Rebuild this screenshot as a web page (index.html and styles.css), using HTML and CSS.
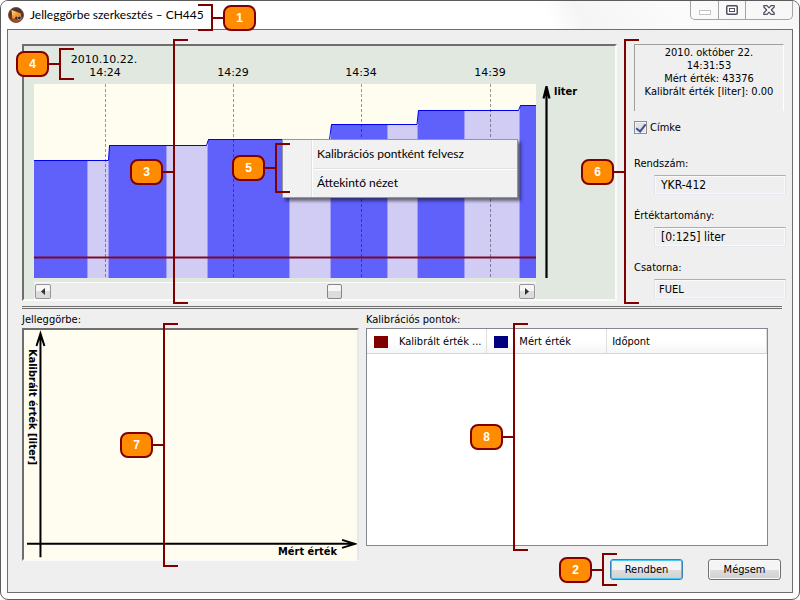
FILE: index.html
```html
<!DOCTYPE html>
<html lang="hu">
<head>
<meta charset="utf-8">
<title>Jelleggörbe szerkesztés – CH445</title>
<link rel="stylesheet" href="styles.css">
</head>
<body>
<div class="window">
  <header class="titlebar">
    <svg class="app-icon" viewBox="0 0 16 16" aria-hidden="true">
      <defs>
        <radialGradient id="orb" cx="50%" cy="85%" r="80%">
          <stop offset="0" stop-color="#b5532c"/>
          <stop offset="0.5" stop-color="#6b3524"/>
          <stop offset="1" stop-color="#3d3636"/>
        </radialGradient>
        <linearGradient id="flag" x1="0" y1="0" x2="1" y2="1">
          <stop offset="0" stop-color="#ffe0a0"/>
          <stop offset="0.5" stop-color="#f59a2c"/>
          <stop offset="1" stop-color="#d9731a"/>
        </linearGradient>
      </defs>
      <circle cx="8" cy="8" r="7.5" fill="url(#orb)" stroke="#8a4a35"/>
      <path d="M3.500 3 13 6.500v3L4.500 12z" fill="url(#flag)"/>
      <circle cx="8.500" cy="11" r="1.300" fill="#222"/>
      <circle cx="11.300" cy="11" r="1.800" fill="#222" stroke="#b9a79c" stroke-width=".8"/>
    </svg>
    <h1 class="title">Jelleggörbe szerkesztés – CH445</h1>
    <div class="window-buttons">
      <button class="wb" type="button" disabled aria-label="Kis méret">
        <svg viewBox="0 0 12 5" width="12" height="5"><rect x=".5" y=".5" width="11" height="4" fill="#fff" stroke="#c4c4c4"/></svg>
      </button>
      <button class="wb" type="button" aria-label="Teljes méret">
        <svg viewBox="0 0 12 10" width="12" height="10"><rect x=".75" y=".75" width="10.500" height="8.500" rx="1" fill="#fff" stroke="#50505e" stroke-width="1.500"/><rect x="3.500" y="3.500" width="5" height="3" fill="#fff" stroke="#50505e"/></svg>
      </button>
      <button class="wb wb-close" type="button" aria-label="Bezárás">
        <svg viewBox="0 0 12 10" width="12" height="10"><path d="M.8.6H4L6 2.900 8 .6h3.200v1.400L8.300 5l2.900 3v1.400H8L6 7.100 4 9.400H.8V8l2.900-3L.8 2z" fill="#fff" stroke="#50505e" stroke-width="1.200" stroke-linejoin="round"/></svg>
      </button>
    </div>
  </header>

  <main class="client">
    <section class="upper">
      <div class="chart-panel">
        <svg class="chart" viewBox="24 46 591 236" role="img" aria-label="Mért értékek">
          <g class="chart-text">
            <text x="104" y="63" text-anchor="middle">2010.10.22.</text>
            <text x="105" y="76" text-anchor="middle">14:24</text>
            <text x="233" y="76" text-anchor="middle">14:29</text>
            <text x="361" y="76" text-anchor="middle">14:34</text>
            <text x="490" y="76" text-anchor="middle">14:39</text>
          </g>
          <rect x="34" y="84" width="502" height="194" fill="#fffdf0"/>
          <path fill="#d0ccf4" d="M34 160H108L110 145H207L209 139H330L332 124H417L419 110H519L521 105H536V278H34z"/>
          <path fill="#6060fa" d="M34 160H87V278H34zM109 145H166V278H109zM208 139H289V278H208zM331 124H387V278H331zM418 110H464V278H418zM520 105H536V278H520z"/>
          <path class="block-edge" d="M87.500 161V278M108.500 161V278M166.500 146V278M207.500 146V278M289.500 140V278M330.500 140V278M387.500 125V278M417.500 125V278M464.500 111V278M519.500 111V278"/>
          <path fill="none" stroke="#0000f0" d="M34 160.500H108.500L109.500 145.500H206.500L208.500 139.500H329.500L331.500 124.500H417L418.500 110.500H518.500L520.500 105.500H536"/>
          <path class="grid-line" d="M105.500 84V278M233.500 84V278M361.500 84V278M490.500 84V278"/>
          <path d="M34 257.500H536" stroke="#7c0a28" stroke-width="2"/>
          <path d="M546.500 278V86M543.500 98.500 546.500 86.500 549.500 98.500" fill="none" stroke="#000" stroke-width="2.200"/>
          <text class="chart-label" x="554" y="95">liter</text>
        </svg>
        <div class="scrollbar">
          <button class="scroll-arrow" type="button" aria-label="Balra"><svg viewBox="0 0 4 7" width="4" height="7"><path d="M4 0v7L0 3.500z" fill="#333"/></svg></button>
          <input class="scroll-range" type="range" min="0" max="100" value="61" aria-label="Görgetés">
          <button class="scroll-arrow" type="button" aria-label="Jobbra"><svg viewBox="0 0 4 7" width="4" height="7"><path d="M0 0v7l4-3.500z" fill="#333"/></svg></button>
        </div>
      </div>

      <aside class="side">
        <div class="info">
          <div>2010. október 22.</div>
          <div>14:31:53</div>
          <div>Mért érték: 43376</div>
          <div>Kalibrált érték [liter]: 0.00</div>
        </div>
        <label class="check"><input type="checkbox" checked><span>Címke</span></label>
        <div class="field"><label for="plate">Rendszám:</label><input id="plate" type="text" readonly value="YKR-412"></div>
        <div class="field"><label for="range">Értéktartomány:</label><input id="range" type="text" readonly value="[0:125] liter"></div>
        <div class="field"><label for="channel">Csatorna:</label><input id="channel" class="tight" type="text" readonly value="FUEL"></div>
      </aside>
    </section>

    <div class="divider"></div>

    <section class="lower">
      <div class="curve">
        <h2 class="caption">Jelleggörbe:</h2>
        <div class="curve-panel">
          <svg class="curve-plot" viewBox="24 330 334 230" role="img" aria-label="Jelleggörbe">
            <path d="M40.500 558V334M36.500 346 40.500 333.500 44.500 346M27 544.500H356M343 540.500 356 544.500 343 548.500" fill="none" stroke="#000" stroke-width="2"/>
            <text class="chart-label" transform="translate(29 349) rotate(90)">Kalibrált érték [liter]</text>
            <text class="chart-label" x="338" y="556" text-anchor="end">Mért érték</text>
          </svg>
        </div>
      </div>
      <div class="points">
        <h2 class="caption">Kalibrációs pontok:</h2>
        <div class="list">
          <table>
            <colgroup><col class="c1"><col class="c2"><col class="c3"></colgroup>
            <thead><tr>
              <th scope="col"><span class="head"><i class="swatch red"></i>Kalibrált érték ...</span></th>
              <th scope="col"><span class="head"><i class="swatch blue"></i>Mért érték</span></th>
              <th scope="col"><span class="head">Időpont</span></th>
            </tr></thead>
          </table>
        </div>
        <div class="actions">
          <button class="btn btn-default" type="button">Rendben</button>
          <button class="btn" type="button">Mégsem</button>
        </div>
      </div>
    </section>
  </main>

  <div class="menu" role="menu">
    <button type="button" role="menuitem">Kalibrációs pontként felvesz</button>
    <hr>
    <button type="button" role="menuitem">Áttekintő nézet</button>
  </div>

  <div class="callout flip n1"><b>1</b><i></i><span></span></div>
  <div class="callout n2"><b>2</b><i></i><span></span></div>
  <div class="callout n3"><b>3</b><i></i><span></span></div>
  <div class="callout n4"><b>4</b><i></i><span></span></div>
  <div class="callout n5"><b>5</b><i></i><span></span></div>
  <div class="callout n6"><b>6</b><i></i><span></span></div>
  <div class="callout n7"><b>7</b><i></i><span></span></div>
  <div class="callout n8"><b>8</b><i></i><span></span></div>
</div>
</body>
</html>
```

FILE: styles.css
```css
* { box-sizing: border-box; }

body {
  margin: 0;
  background: #fff;
  color: #000;
  font: 11px/13px "DejaVu Sans Condensed", "DejaVu Sans", sans-serif;
}

button, input { font: inherit; color: inherit; margin: 0; }
svg { display: block; }

.window {
  position: relative;
  display: flex;
  flex-direction: column;
  min-height: 100vh;
  border: 1px solid #5c5c5c;
  border-radius: 8px;
  background: #fdfdfd;
}

/* Title bar */
.titlebar {
  display: flex;
  align-items: center;
  height: 28px;
  padding: 0 6px 0 7px;
  border-radius: 7px 7px 0 0;
  background: linear-gradient(65deg, #fff 0 68%, #f5f5f5 72%, #fbfbfb 84%, #f6f6f6 100%);
}
.app-icon { width: 16px; height: 16px; }
.title {
  flex: 1;
  margin: 0 0 0 6px;
  font: 12px/16px Lato, sans-serif;
}
.window-buttons {
  display: flex;
  align-self: flex-start;
  border: 1px solid #a4a4a4;
  border-top: 0;
  border-radius: 0 0 5px 5px;
}
.wb {
  display: flex;
  align-items: center;
  justify-content: center;
  width: 27px;
  height: 18px;
  padding: 0;
  border: 0;
  border-right: 1px solid #a4a4a4;
  background: transparent;
}
.wb:disabled { padding-top: 4px; width: 28px; }
.wb-close { width: 46px; border-right: 0; }

/* Client area */
.client {
  flex: 1;
  display: flex;
  flex-direction: column;
  margin: 0 6px;
  margin-bottom: 6px;
  padding: 14px 6px 10px 14px;
  border: 1px solid #6e6e6e;
  background: #efefef;
}
.upper { display: flex; gap: 17px; }

.chart-panel {
  flex: 1;
  min-width: 0;
  border: 2px solid;
  border-color: #6e6e6e #fafafa #fafafa #6e6e6e;
  background: #e0e8e0;
}
.chart { width: 100%; }
.chart-text { font: 11px "DejaVu Sans", sans-serif; }
.chart-label { font: bold 11px "DejaVu Sans Condensed", "DejaVu Sans", sans-serif; }
.block-edge { stroke: #a09cf8; }
.grid-line { stroke: #000; stroke-opacity: .4; stroke-dasharray: 3 2; }

.scrollbar {
  display: flex;
  align-items: center;
  height: 17px;
  margin: 0 79px 0 10px;
  padding: 0 1px;
  background: #ececec;
  border-top: 1px solid #fafafa;
}
.scroll-arrow {
  display: flex;
  align-items: center;
  justify-content: center;
  width: 16px;
  height: 15px;
  padding: 0;
  border: 1px solid #979797;
  border-radius: 2px;
  background: linear-gradient(#f6f6f6 50%, #dcdcdc 50%);
}
.scroll-range {
  flex: 1;
  min-width: 0;
  height: 15px;
  appearance: none;
  background: transparent;
}
.scroll-range::-webkit-slider-thumb {
  appearance: none;
  width: 15px;
  height: 15px;
  border: 1px solid #858585;
  border-radius: 2px;
  background: linear-gradient(#f6f6f6 50%, #dcdcdc 50%);
}

/* Side panel */
.side { width: 152px; }
.info {
  height: 67px;
  margin-right: 2px;
  padding-top: 1px;
  border: 1px solid #a0a0a0;
  border-right-color: #fff;
  border-bottom: 0;
  text-align: center;
  white-space: nowrap;
}
.check {
  display: flex;
  align-items: center;
  gap: 3px;
  height: 13px;
  margin: 10px 0 23px;
}
.check input {
  appearance: none;
  width: 13px;
  height: 13px;
  border: 1px solid #8e8f8f;
  background: #dfe3ea;
  box-shadow: inset 0 0 0 1px #f4f4f4;
  position: relative;
}
.check input:checked::after {
  content: "";
  position: absolute;
  left: 3px;
  top: 0;
  width: 4px;
  height: 8px;
  border: solid #3f4f94;
  border-width: 0 2px 2px 0;
  transform: rotate(38deg);
}
.field { display: flex; flex-direction: column; gap: 5px; margin-bottom: 14px; }
.field:last-child { margin-bottom: 0; }
.field input {
  height: 20px;
  min-width: 0;
  margin-left: 20px;
  padding: 0 6px;
  border: 1px solid;
  border-color: #abadb3 #e2e3ea #e3e9ef #e2e3ea;
  background: #efefef;
  box-shadow: inset 0 0 0 1px #fafafa;
  font: 12px "DejaVu Sans Condensed", "DejaVu Sans", sans-serif;
}
.field .tight { padding: 0 4px; font-size: 11px; }

.divider {
  height: 3px;
  margin: 5px 4px 0 0;
  border: solid #6e6e6e;
  border-width: 1px 0;
}

/* Lower part */
.lower { display: flex; flex: 1; gap: 7px; margin-top: 4px; }
.caption { margin: 0 0 2px; font: inherit; }
.curve { flex: 337; min-width: 0; }
.points { flex: 420; min-width: 0; }
.curve-panel {
  border: 2px solid;
  border-color: #6e6e6e #e8e8e8 #fafafa #6e6e6e;
  background: #fffdf0;
}
.curve-plot { width: 100%; }

.list {
  height: 218px;
  margin-right: 18px;
  border: 1px solid #828790;
  background: #fff;
}
.list table { width: 100%; table-layout: fixed; border-collapse: collapse; }
.c1, .c2 { width: 30%; }
.list th {
  height: 24px;
  padding: 2px 0 0 5px;
  border-right: 1px solid #dfdfdf;
  border-bottom: 1px solid #d5d5d5;
  background: linear-gradient(#fff 50%, #f4f5f7);
  font-weight: normal;
  text-align: left;
}
.head { display: flex; align-items: center; white-space: nowrap; }
.swatch { width: 14px; height: 12px; margin: 0 11px 0 2px; }
.red { background: #800000; }
.blue { background: #000080; }

.actions { display: flex; justify-content: flex-end; gap: 25px; margin: 13px 5px 0 0; }
.btn {
  width: 73px;
  height: 21px;
  padding: 0;
  border: 1px solid #707070;
  border-radius: 3px;
  background: linear-gradient(#f4f4f4 50%, #dedede 50%, #d0d0d0);
  box-shadow: inset 0 0 0 1px #fafafa;
}
.btn-default { border-color: #3c7fb1; box-shadow: inset 0 0 0 1px #48c8f4; }

/* Context menu */
.menu {
  position: absolute;
  left: 281px;
  top: 138px;
  display: flex;
  flex-direction: column;
  width: 236px;
  padding: 1px 2px;
  border: 1px solid #979797;
  background: linear-gradient(90deg, transparent 28px, #e0e0e0 28px 29px, #fff 29px 30px, transparent 30px) #f1f1f1;
  box-shadow: 3px 3px 3px rgba(0, 0, 0, .5);
}
.menu button {
  height: 26px;
  padding: 0 0 0 32px;
  border: 0;
  background: transparent;
  font: 12px/22px Lato, sans-serif;
  text-align: left;
  white-space: nowrap;
}
.menu hr {
  width: 203px;
  margin: 1px 0 0 29px;
  border: 0;
  border-top: 1px solid #e0e0e0;
  border-bottom: 1px solid #fff;
}

/* Numbered callouts laid over the dialog */
.callout {
  position: absolute;
  display: flex;
  align-items: center;
  width: 58px;
  pointer-events: none;
}
.callout b {
  width: 33px;
  height: 26px;
  border: 2px solid #800000;
  border-radius: 8px;
  background: #ff8c00;
  color: #fff;
  font: bold 12px/22px "Liberation Sans", sans-serif;
  text-align: center;
}
.callout i { width: 10px; height: 2px; background: #800000; }
.callout span {
  width: 15px;
  height: 100%;
  border: 2px solid #800000;
  border-right: 0;
}
.callout.flip { flex-direction: row-reverse; }
.callout.flip span { border-right: 2px solid #800000; border-left: 0; }

.n1 { left: 197px; top: 3px; height: 27px; }
.n2 { left: 558px; top: 552px; height: 33px; }
.n3 { left: 129px; top: 38px; height: 265px; }
.n4 { left: 15px; top: 47px; height: 32px; }
.n5 { left: 231px; top: 142px; height: 50px; }
.n6 { left: 580px; top: 38px; height: 265px; }
.n7 { left: 119px; top: 322px; height: 244px; }
.n8 { left: 469px; top: 322px; height: 228px; }
```
